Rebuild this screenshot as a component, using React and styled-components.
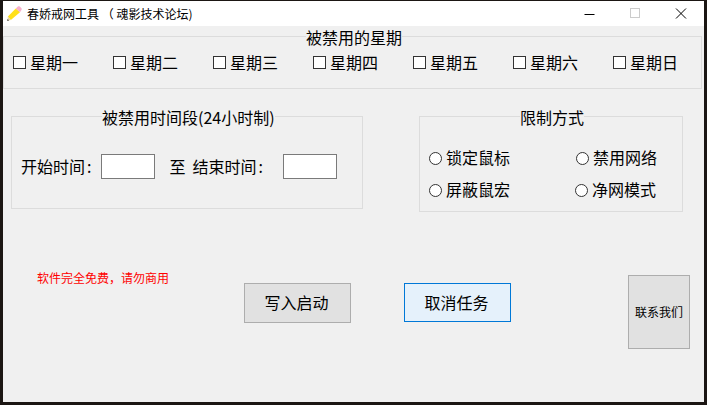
import React from "react";
import styled, { createGlobalStyle } from "styled-components";

const Global = createGlobalStyle`
  html, body { margin: 0; padding: 0; width: 707px; height: 405px; overflow: hidden; background: #1b1613; }
  * { box-sizing: border-box; }
`;

const FONT = `"Noto Sans CJK SC", "Noto Sans", "Liberation Sans", sans-serif`;

const Screen = styled.div`
  width: 707px;
  height: 405px;
  padding: 1px 3px 3px 3px;
  font-family: ${FONT};
  color: #000;
`;
const Win = styled.div`
  width: 701px;
  height: 401px;
  background: #f0f0f0;
  display: flex;
  flex-direction: column;
`;
const TitleBar = styled.div`
  height: 25px;
  flex: none;
  background: #fff;
  display: flex;
  align-items: center;
  padding-left: 4px;
`;
const TitleText = styled.span`
  font-size: 12px;
  line-height: 25px;
  margin-left: 5px;
  white-space: pre;
  flex: 1;
`;
const Ctrl = styled.button`
  width: 46px;
  height: 25px;
  border: 0;
  padding: 0;
  background: transparent;
  display: flex;
  align-items: center;
  justify-content: center;
`;
const Group = styled.fieldset`
  margin: ${p => p.$m};
  width: ${p => p.$w}px;
  height: ${p => p.$h}px;
  padding: 0;
  border: 1px solid #dcdcdc;
  min-width: 0;
`;
const Legend = styled.legend`
  margin-left: ${p => p.$x}px;
  padding: 0;
  font-size: 16px;
  line-height: 22px;
  height: 20px;
  white-space: nowrap;
`;
const WeekRow = styled.div`
  display: flex;
  padding: 5px 0 0 9px;
`;
const Day = styled.label`
  width: 100px;
  flex: none;
  display: flex;
  align-items: center;
  font-size: 16px;
  line-height: 22px;
  white-space: nowrap;
`;
const Box = styled.span`
  width: 13px;
  height: 13px;
  flex: none;
  border: 1px solid #333;
  background: #fff;
  margin-right: 4px;
`;
const Middle = styled.div`
  display: flex;
  align-items: flex-start;
  margin-top: 17px;
`;
const TimeRow = styled.div`
  display: flex;
  align-items: center;
  padding: 28px 0 0 9px;
  font-size: 16px;
  line-height: 25px;
  white-space: nowrap;
`;
const Colon = styled.span`
  margin-left: 2px;
`;
const TimeInput = styled.div`
  width: 54px;
  height: 25px;
  flex: none;
  background: #fff;
  border: 1px solid #7a7a7a;
  margin: ${p => p.$m};
`;
const Gap = styled.span`
  width: ${p => p.$w}px;
  flex: none;
`;
const RadioGrid = styled.div`
  display: grid;
  grid-template-columns: 147px 110px;
  grid-auto-rows: 32px;
  padding: 15px 0 0 9px;
`;
const RadioItem = styled.label`
  display: flex;
  align-items: center;
  font-size: 16px;
  line-height: 22px;
  white-space: nowrap;
  margin-left: ${p => p.$x || 0}px;
`;
const Dot = styled.span`
  width: 13px;
  height: 13px;
  flex: none;
  border-radius: 50%;
  border: 1px solid #333;
  background: #fff;
  margin: 2px 4px 0 0;
`;
const Bottom = styled.div`
  display: flex;
  align-items: flex-start;
  margin-top: 50px;
`;
const Note = styled.div`
  width: 207px;
  padding: 8px 0 0 34px;
  color: #f00;
  font-size: 12px;
  line-height: 16px;
  white-space: nowrap;
`;
const Btn = styled.button`
  font-family: ${FONT};
  color: #000;
  font-size: ${p => p.$fs || 16}px;
  padding: ${p => p.$pad || "0 2px 2px 0"};
  width: ${p => p.$w}px;
  height: ${p => p.$h}px;
  margin: ${p => p.$m};
  flex: none;
  background: ${p => (p.$focus ? "#e5f1fb" : "#e1e1e1")};
  border: 1px solid ${p => (p.$focus ? "#0078d7" : "#adadad")};
  white-space: nowrap;
`;

const Pencil = () => (
  <svg width="15" height="15" viewBox="0 0 15 15">
    <path d="M3.8 14 .9 10.6 8.8 2.4 13 6.2Z" fill="#ffe01a" />
    <path d="M8.8 2.4 10.6.7c.7-.6 1.7-.6 2.4 0l1.3 1.2c.6.7.6 1.7 0 2.4L13 6.2Z" fill="#f8b0cc" />
    <path d="M.9 10.6 3.8 14 .4 14.8Z" fill="#e6d5a5" />
    <path d="M.5 13 2 14.4.3 14.9Z" fill="#333" />
  </svg>
);

const days = ["星期一", "星期二", "星期三", "星期四", "星期五", "星期六", "星期日"];

export default function App() {
  return (
    <Screen>
      <Global />
      <Win>
        <TitleBar>
          <Pencil />
          <TitleText>{"春娇戒网工具 （ 魂影技术论坛)"}</TitleText>
          <Ctrl aria-label="最小化">
            <svg width="12" height="12" viewBox="0 0 12 12"><path d="M1.5 6.5H11.5" stroke="#000" strokeWidth="1" /></svg>
          </Ctrl>
          <Ctrl aria-label="最大化">
            <svg width="12" height="12" viewBox="0 0 12 12"><rect x="1.5" y=".5" width="9" height="9" fill="none" stroke="#ccc" /></svg>
          </Ctrl>
          <Ctrl aria-label="关闭">
            <svg width="12" height="12" viewBox="0 0 12 12"><path d="M1 .5 11 10.5M11 .5 1 10.5" stroke="#000" strokeWidth="1" /></svg>
          </Ctrl>
        </TitleBar>
        <Group $m="0" $w={699} $h={63}>
          <Legend $x={302}>被禁用的星期</Legend>
          <WeekRow>
            {days.map(d => (
              <Day key={d}><Box />{d}</Day>
            ))}
          </WeekRow>
        </Group>
        <Middle>
          <Group $m="0 0 0 8px" $w={352} $h={103}>
            <Legend $x={90}>被禁用时间段(24小时制)</Legend>
            <TimeRow>
              开始时间<Colon>:</Colon>
              <TimeInput $m="0 14px 0 10px" />
              至
              <Gap $w={7} />
              结束时间<Colon>:</Colon>
              <TimeInput $m="0 0 0 20px" />
            </TimeRow>
          </Group>
          <Group $m="0 0 0 56px" $w={264} $h={106}>
            <Legend $x={100}>限制方式</Legend>
            <RadioGrid>
              <RadioItem><Dot />锁定鼠标</RadioItem>
              <RadioItem><Dot />禁用网络</RadioItem>
              <RadioItem><Dot />屏蔽鼠宏</RadioItem>
              <RadioItem $x={-1}><Dot />净网模式</RadioItem>
            </RadioGrid>
          </Group>
        </Middle>
        <Bottom>
          <Note>软件完全免费，请勿商用</Note>
          <Btn $w={107} $h={40} $m="21px 0 0 34px">写入启动</Btn>
          <Btn $focus $w={107} $h={39} $m="21px 0 0 53px">取消任务</Btn>
          <Btn $w={62} $h={74} $m="13px 0 0 117px" $fs={12} $pad="0 0 2px 0">联系我们</Btn>
        </Bottom>
      </Win>
    </Screen>
  );
}
